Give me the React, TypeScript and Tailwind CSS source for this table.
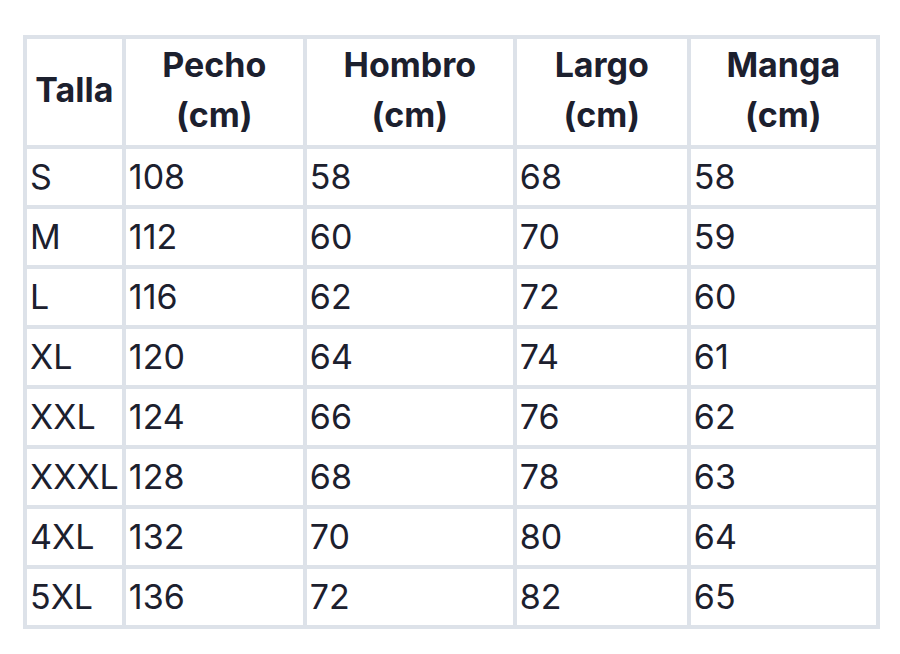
const rows = [
  ['S', '108', '58', '68', '58'],
  ['M', '112', '60', '70', '59'],
  ['L', '116', '62', '72', '60'],
  ['XL', '120', '64', '74', '61'],
  ['XXL', '124', '66', '76', '62'],
  ['XXXL', '128', '68', '78', '63'],
  ['4XL', '132', '70', '80', '64'],
  ['5XL', '136', '72', '82', '65'],
];

const headers = [
  ['Talla'],
  ['Pecho', '(cm)'],
  ['Hombro', '(cm)'],
  ['Largo', '(cm)'],
  ['Manga', '(cm)'],
];

export default function App() {
  return (
    <div className="w-[900px] h-[654px] bg-white pt-[35px] pl-[23px] font-['Inter','Noto_Sans',sans-serif] text-[#1c202e]">
      <table className="table-fixed border-collapse">
        <colgroup>
          <col className="w-[96px]" />
          <col className="w-[181px]" />
          <col className="w-[210px]" />
          <col className="w-[174px]" />
          <col className="w-[189px]" />
        </colgroup>
        <thead>
          <tr className="h-[110px]">
            {headers.map((h, i) => (
              <th
                key={i}
                className="border-4 border-[#dde2e9] text-center align-middle font-bold text-[34px] leading-[50px] pt-0 pb-[4px] px-0"
              >
                {h.map((line, j) => (
                  <div key={j}>{line}</div>
                ))}
              </th>
            ))}
          </tr>
        </thead>
        <tbody>
          {rows.map((r) => (
            <tr key={r[0]} className="h-[60px]">
              {r.map((c, i) => (
                <td
                  key={i}
                  className="border-4 border-[#dde2e9] text-left align-middle text-[34px] font-normal leading-none px-[3px] py-0 whitespace-nowrap"
                >
                  {c}
                </td>
              ))}
            </tr>
          ))}
        </tbody>
      </table>
    </div>
  );
}
